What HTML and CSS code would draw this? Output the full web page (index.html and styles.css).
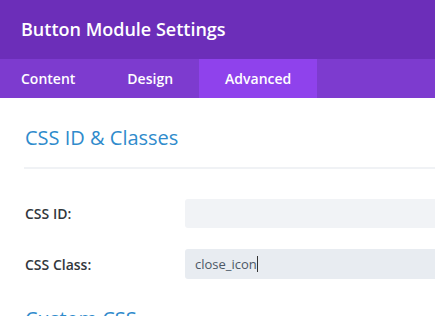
FILE: index.html
```html
<!DOCTYPE html>
<html lang="en">
<head>
  <meta charset="UTF-8" />
  <meta name="viewport" content="width=device-width, initial-scale=1" />
  <title>Button Module Settings</title>
  <link rel="stylesheet" href="styles.css">
</head>
<body>
  <header class="modal-head">
    <h1>Button Module Settings</h1>
  </header>
  <nav class="tabs">
    <a href="#content">Content</a>
    <a href="#design">Design</a>
    <a href="#advanced" class="active">Advanced</a>
  </nav>
  <main class="panel">
    <section class="group">
      <h2>CSS ID &amp; Classes</h2>
      <div class="divider"></div>
      <div class="row">
        <label for="css-id">CSS ID:</label>
        <div class="field" id="css-id"></div>
      </div>
      <div class="row">
        <label for="css-class">CSS Class:</label>
        <div class="field focused" id="css-class">close_icon<span class="caret"></span></div>
      </div>
    </section>
    <section class="group">
      <h2>Custom CSS</h2>
    </section>
  </main>
</body>
</html>
```

FILE: styles.css
```css
html, body {
  height: 100%;
}
body {
  font-family: "Open Sans", "Noto Sans", sans-serif;
  margin: 0;
  background: #fff;
  color: #32373c;
  overflow: hidden;
}
.modal-head {
  background: #6c2eb9;
  height: 59px;
  padding-left: 21px;
}
.modal-head h1 {
  margin: 0;
  font-size: 18px;
  font-weight: 600;
  line-height: 59px;
  color: #fff;
}
.tabs {
  display: flex;
  background: #7d3bcf;
  height: 39px;
}
.tabs a {
  display: block;
  padding: 0 26px;
  line-height: 39px;
  font-size: 14px;
  font-weight: 600;
  color: #fff;
  text-decoration: none;
}
.tabs a:first-child {
  padding-left: 21px;
}
.tabs a.active {
  background: #8f42ec;
}
.group {
  padding-left: 25px;
}
.group h2 {
  margin: 26px 0 0;
  font-size: 20px;
  font-weight: 400;
  line-height: 28px;
  color: #2f8bcc;
}
.divider {
  height: 2px;
  background: #f0f2f5;
  margin: 15px 0 30px -1px;
}
.row {
  display: flex;
  align-items: center;
  margin-bottom: 21px;
}
.row label {
  width: 160px;
  font-size: 14px;
  font-weight: 600;
  color: #32373c;
}
.field {
  flex: 1;
  height: 29px;
  line-height: 29px;
  padding-left: 10px;
  background: #f1f3f6;
  border-radius: 3px 0 0 3px;
  font-size: 13px;
  color: #4c5866;
}
.field.focused {
  height: 30px;
  line-height: 30px;
  background: #e8ecf1;
}
.caret {
  display: inline-block;
  width: 1px;
  height: 16px;
  background: #333;
  vertical-align: -3px;
}
.group + .group h2 {
  margin-top: 26px;
}
```
